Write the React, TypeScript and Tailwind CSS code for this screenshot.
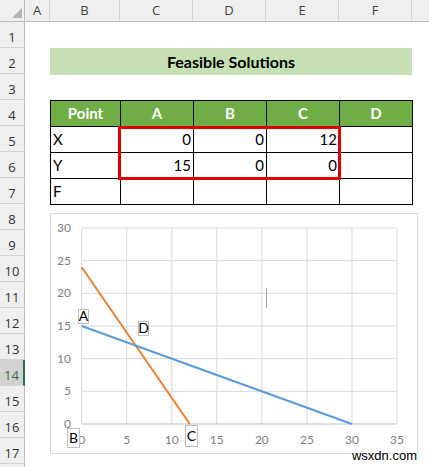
const COLS = [
  { name: "A", w: 25 },
  { name: "B", w: 70 },
  { name: "C", w: 73 },
  { name: "D", w: 73 },
  { name: "E", w: 73 },
  { name: "F", w: 73 },
];

const ROWS = Array.from({ length: 18 }, (_, i) => i + 1);

const SELECTED_ROW = 14;

// chart geometry (relative to chart box)
const X0 = 31.7;
const XS = (347 - 31.7) / 35;
const Y0 = 211;
const YS = 196 / 30;
const px = (x: number) => X0 + x * XS;
const py = (y: number) => Y0 - y * YS;

const TICKS_X = [0, 5, 10, 15, 20, 25, 30, 35];
const TICKS_Y = [0, 5, 10, 15, 20, 25, 30];

const LABELS = [
  { t: "A", x: 28, y: 96, w: 10, h: 14 },
  { t: "D", x: 88, y: 108, w: 10, h: 14 },
  { t: "B", x: 17, y: 215, w: 12, h: 19 },
  { t: "C", x: 135, y: 212, w: 12, h: 21 },
];

const TABLE = [
  ["X", "0", "0", "12", ""],
  ["Y", "15", "0", "0", ""],
  ["F", "", "", "", ""],
];

function FeasibleChart() {
  return (
    <div className="h-[241px] w-[368px] border border-[#d9d9d9] bg-white">
      <svg width="366" height="239" viewBox="1 1 366 239">
        {TICKS_X.map((t) => (
          <line
            key={`gx-${t}`}
            x1={px(t)}
            x2={px(t)}
            y1={py(30)}
            y2={py(0)}
            stroke="#d9d9d9"
            strokeWidth="1"
          />
        ))}
        {TICKS_Y.map((t) => (
          <line
            key={`gy-${t}`}
            x1={px(0)}
            x2={px(35)}
            y1={py(t)}
            y2={py(t)}
            stroke={t === 0 ? "#bfbfbf" : "#d9d9d9"}
            strokeWidth="1"
          />
        ))}
        {TICKS_Y.map((t) => (
          <text
            key={`ly-${t}`}
            x={21}
            y={py(t) + 4}
            textAnchor="end"
            fontSize="12"
            fill="#7f7f7f"
            fontFamily="Lato, sans-serif"
          >
            {t}
          </text>
        ))}
        {TICKS_X.map((t) => (
          <text
            key={`lx-${t}`}
            x={px(t)}
            y={231}
            textAnchor="middle"
            fontSize="12"
            fill="#7f7f7f"
            fontFamily="Lato, sans-serif"
          >
            {t}
          </text>
        ))}
        <line x1={px(0)} y1={py(24)} x2={px(12)} y2={py(0)} stroke="#ed7d31" strokeWidth="2" />
        <line x1={px(0)} y1={py(15)} x2={px(30)} y2={py(0)} stroke="#5b9bd5" strokeWidth="2" />
        <line x1={216.5} y1={75} x2={216.5} y2={95} stroke="#a6a6a6" strokeWidth="1" />
        {LABELS.map((l) => (
          <g key={l.t}>
            <rect
              x={l.x + 0.5}
              y={l.y + 0.5}
              width={l.w}
              height={l.h}
              fill="white"
              stroke="#bfbfbf"
            />
            <text
              x={l.x + 0.5 + l.w / 2}
              y={l.y + l.h / 2 + 5}
              textAnchor="middle"
              fontSize="14"
              fill="#000"
              fontFamily="Lato, sans-serif"
            >
              {l.t}
            </text>
          </g>
        ))}
      </svg>
    </div>
  );
}

export default function App() {
  return (
    <div className="relative h-[467px] w-[429px] overflow-hidden bg-white font-['Lato',sans-serif]">
      {/* column headers */}
      <div className="flex h-[22px] border-b border-[#bcbcbc] bg-[#efefef] font-['Open_Sans',sans-serif] text-[13px] text-[#444]">
        <div className="w-[25px] shrink-0 border-r border-[#bcbcbc]">
          <svg width="24" height="21">
            <polygon points="12,18 22,18 22,8" fill="#b4b4b4" />
          </svg>
        </div>
        {COLS.map((c) => (
          <div
            key={c.name}
            style={{ width: c.w }}
            className="flex shrink-0 items-center justify-center border-r border-[#d4d4d4]"
          >
            {c.name}
          </div>
        ))}
        <div className="flex-1" />
      </div>

      <div className="flex">
        {/* row headers */}
        <div className="flex w-[25px] shrink-0 flex-col bg-[#efefef] font-['Open_Sans',sans-serif] text-[13px] text-[#333]">
          {ROWS.map((r) => (
            <div
              key={r}
              className={
                r === SELECTED_ROW
                  ? "flex h-[26px] items-center justify-center border-r-2 border-b border-r-[#217346] border-b-[#d4d4d4] bg-[#d2d2d2] pt-[6px] text-[#3b6b48]"
                  : "flex h-[26px] items-center justify-center border-r border-b border-r-[#bcbcbc] border-b-[#d4d4d4] pt-[6px]"
              }
            >
              {r < 18 ? r : ""}
            </div>
          ))}
        </div>

        {/* sheet area */}
        <div className="flex flex-col pl-[25px]">
          <div className="h-[26px]" />
          <div className="flex h-[27px] w-[362px] items-center justify-center bg-[#c6e0b4] text-[16px] font-bold text-black">
            Feasible Solutions
          </div>
          <div className="h-[25px]" />

          <div className="relative w-[363px]">
            <div className="grid grid-cols-[70px_73px_73px_73px_73px] border-t border-l border-black text-[15px] text-black">
              {["Point", "A", "B", "C", "D"].map((h) => (
                <div
                  key={h}
                  className="flex h-[26px] items-center justify-center border-r border-b border-black bg-[#70ad47] font-bold text-white"
                >
                  {h}
                </div>
              ))}
              {TABLE.map((row) =>
                row.map((v, i) => (
                  <div
                    key={`${row[0]}-${i}`}
                    className={
                      i === 0
                        ? "flex h-[26px] items-end border-r border-b border-black px-[2px] pb-[2px]"
                        : "flex h-[26px] items-end justify-end border-r border-b border-black px-[2px] pb-[2px]"
                    }
                  >
                    {v}
                  </div>
                )),
              )}
            </div>
            <div className="absolute top-[26px] left-[68px] h-[54px] w-[223px] border-[3px] border-[#e10000]" />
          </div>

          <div className="mt-[8px]">
            <FeasibleChart />
          </div>
        </div>
      </div>

      <div className="absolute right-[12px] bottom-[2px] font-['Liberation_Sans',sans-serif] text-[13px] text-black">
        wsxdn.com
      </div>
    </div>
  );
}
